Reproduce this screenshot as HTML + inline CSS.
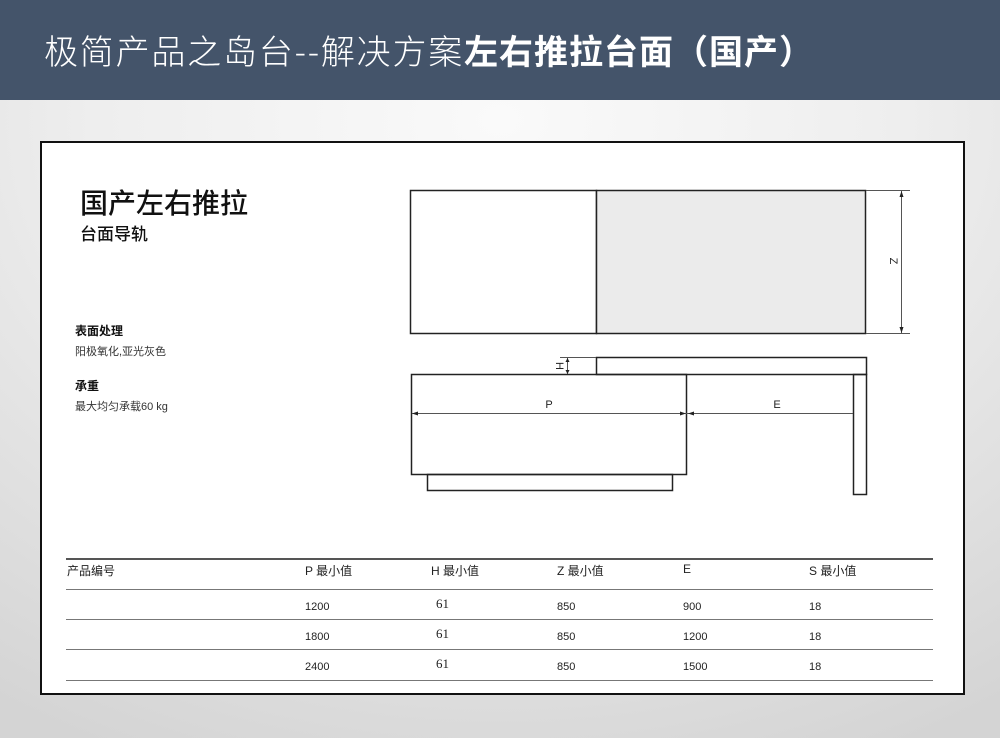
<!DOCTYPE html>
<html><head><meta charset="utf-8"><style>
*{margin:0;padding:0;box-sizing:border-box}
body{width:1000px;height:738px;overflow:hidden;position:relative;font-family:"Liberation Sans","Noto Sans CJK SC",sans-serif;background:radial-gradient(ellipse 900px 700px at 500px 120px,#fafafa 0%,#eeeeee 45%,#d4d4d4 100%)}
.hdr{position:absolute;left:0;top:0;width:1000px;height:100px;background:#44546a;color:#fff;font-size:34px;line-height:100px;padding-left:44px;font-family:"Noto Sans CJK SC",sans-serif;font-weight:300;white-space:nowrap;letter-spacing:1.8px}
.hdr b{font-weight:700;letter-spacing:1px}
.box{position:absolute;left:40px;top:141px;width:925px;height:554px;background:#fff;border:2px solid #111}
.t{position:absolute;white-space:nowrap;color:#111}
</style></head><body>
<div class="hdr">极简产品之岛台--解决方案<b>左右推拉台面（国产）</b></div>
<div class="box"></div>
<div class="t" style="left:80px;top:182px;font-size:28px;font-family:'Noto Sans CJK SC',sans-serif;font-weight:500">国产左右推拉</div>
<div class="t" style="left:80px;top:220px;font-size:17px;font-family:'Noto Sans CJK SC',sans-serif;font-weight:500">台面导轨</div>
<div class="t" style="left:75px;top:322px;font-size:12px;font-weight:700">表面处理</div>
<div class="t" style="left:75px;top:343px;font-size:11px;color:#333">阳极氧化,亚光灰色</div>
<div class="t" style="left:75px;top:377px;font-size:12px;font-weight:700">承重</div>
<div class="t" style="left:75px;top:398px;font-size:11px;color:#333">最大均匀承载60 kg</div>
<svg style="position:absolute;left:0;top:0" width="1000" height="738">
<g fill="none" stroke="#222" stroke-width="1.5">
<rect x="410.5" y="190.5" width="186" height="143" fill="#fff"/>
<rect x="596.5" y="190.5" width="269" height="143" fill="#ebebeb"/>
<rect x="596.5" y="357.5" width="270" height="17"/>
<rect x="411.5" y="374.5" width="275" height="100"/>
<rect x="427.5" y="474.5" width="245" height="16"/>
<rect x="853.5" y="374.5" width="13" height="120"/>
</g>
<g stroke="#555" stroke-width="1">
<line x1="866" y1="190.5" x2="910" y2="190.5"/><line x1="866" y1="333.5" x2="910" y2="333.5"/>
<line x1="901.5" y1="191" x2="901.5" y2="333"/>
<line x1="560" y1="357.5" x2="596" y2="357.5"/>
<line x1="567.5" y1="358" x2="567.5" y2="374"/>
<line x1="412" y1="413.5" x2="853" y2="413.5"/>
</g>
<g fill="#222">
<path d="M901.5 191l-2 6h4z"/><path d="M901.5 333l-2-6h4z"/>
<path d="M567.5 358l-2 4h4z"/><path d="M567.5 374l-2-4h4z"/>
<path d="M412 413.5l6-2v4z"/><path d="M686 413.5l-6-2v4z"/><path d="M688 413.5l6-2v4z"/>
</g>
<g font-family="Liberation Sans" font-size="11" fill="#222">
<text x="549" y="408" text-anchor="middle">P</text>
<text x="777" y="408" text-anchor="middle">E</text>
<text transform="translate(890,261) rotate(90)" text-anchor="middle">Z</text>
<text transform="translate(556,366) rotate(90)" text-anchor="middle">H</text>
</g>
<g stroke="#777" stroke-width="1">
<line x1="66" y1="559" x2="933" y2="559" stroke="#555" stroke-width="2"/>
<line x1="66" y1="589.5" x2="933" y2="589.5"/>
<line x1="66" y1="619.5" x2="933" y2="619.5"/>
<line x1="66" y1="649.5" x2="933" y2="649.5"/>
<line x1="66" y1="680.5" x2="933" y2="680.5"/>
</g>
<g font-family="Liberation Sans,Noto Sans CJK SC,sans-serif" font-size="12" fill="#222">
<text x="67" y="575">产品编号</text><text x="305" y="575">P 最小值</text><text x="431" y="575">H 最小值</text><text x="557" y="575">Z 最小值</text><text x="683" y="573">E</text><text x="809" y="575">S 最小值</text>
<g font-size="11">
<text x="305" y="610">1200</text><text x="557" y="610">850</text><text x="683" y="610">900</text><text x="809" y="610">18</text>
<text x="305" y="640">1800</text><text x="557" y="640">850</text><text x="683" y="640">1200</text><text x="809" y="640">18</text>
<text x="305" y="670">2400</text><text x="557" y="670">850</text><text x="683" y="670">1500</text><text x="809" y="670">18</text>
</g>
<g font-family="Liberation Serif,serif" font-size="13">
<text x="436" y="608">61</text><text x="436" y="638">61</text><text x="436" y="668">61</text>
</g>
</g>
</svg>
</body></html>
